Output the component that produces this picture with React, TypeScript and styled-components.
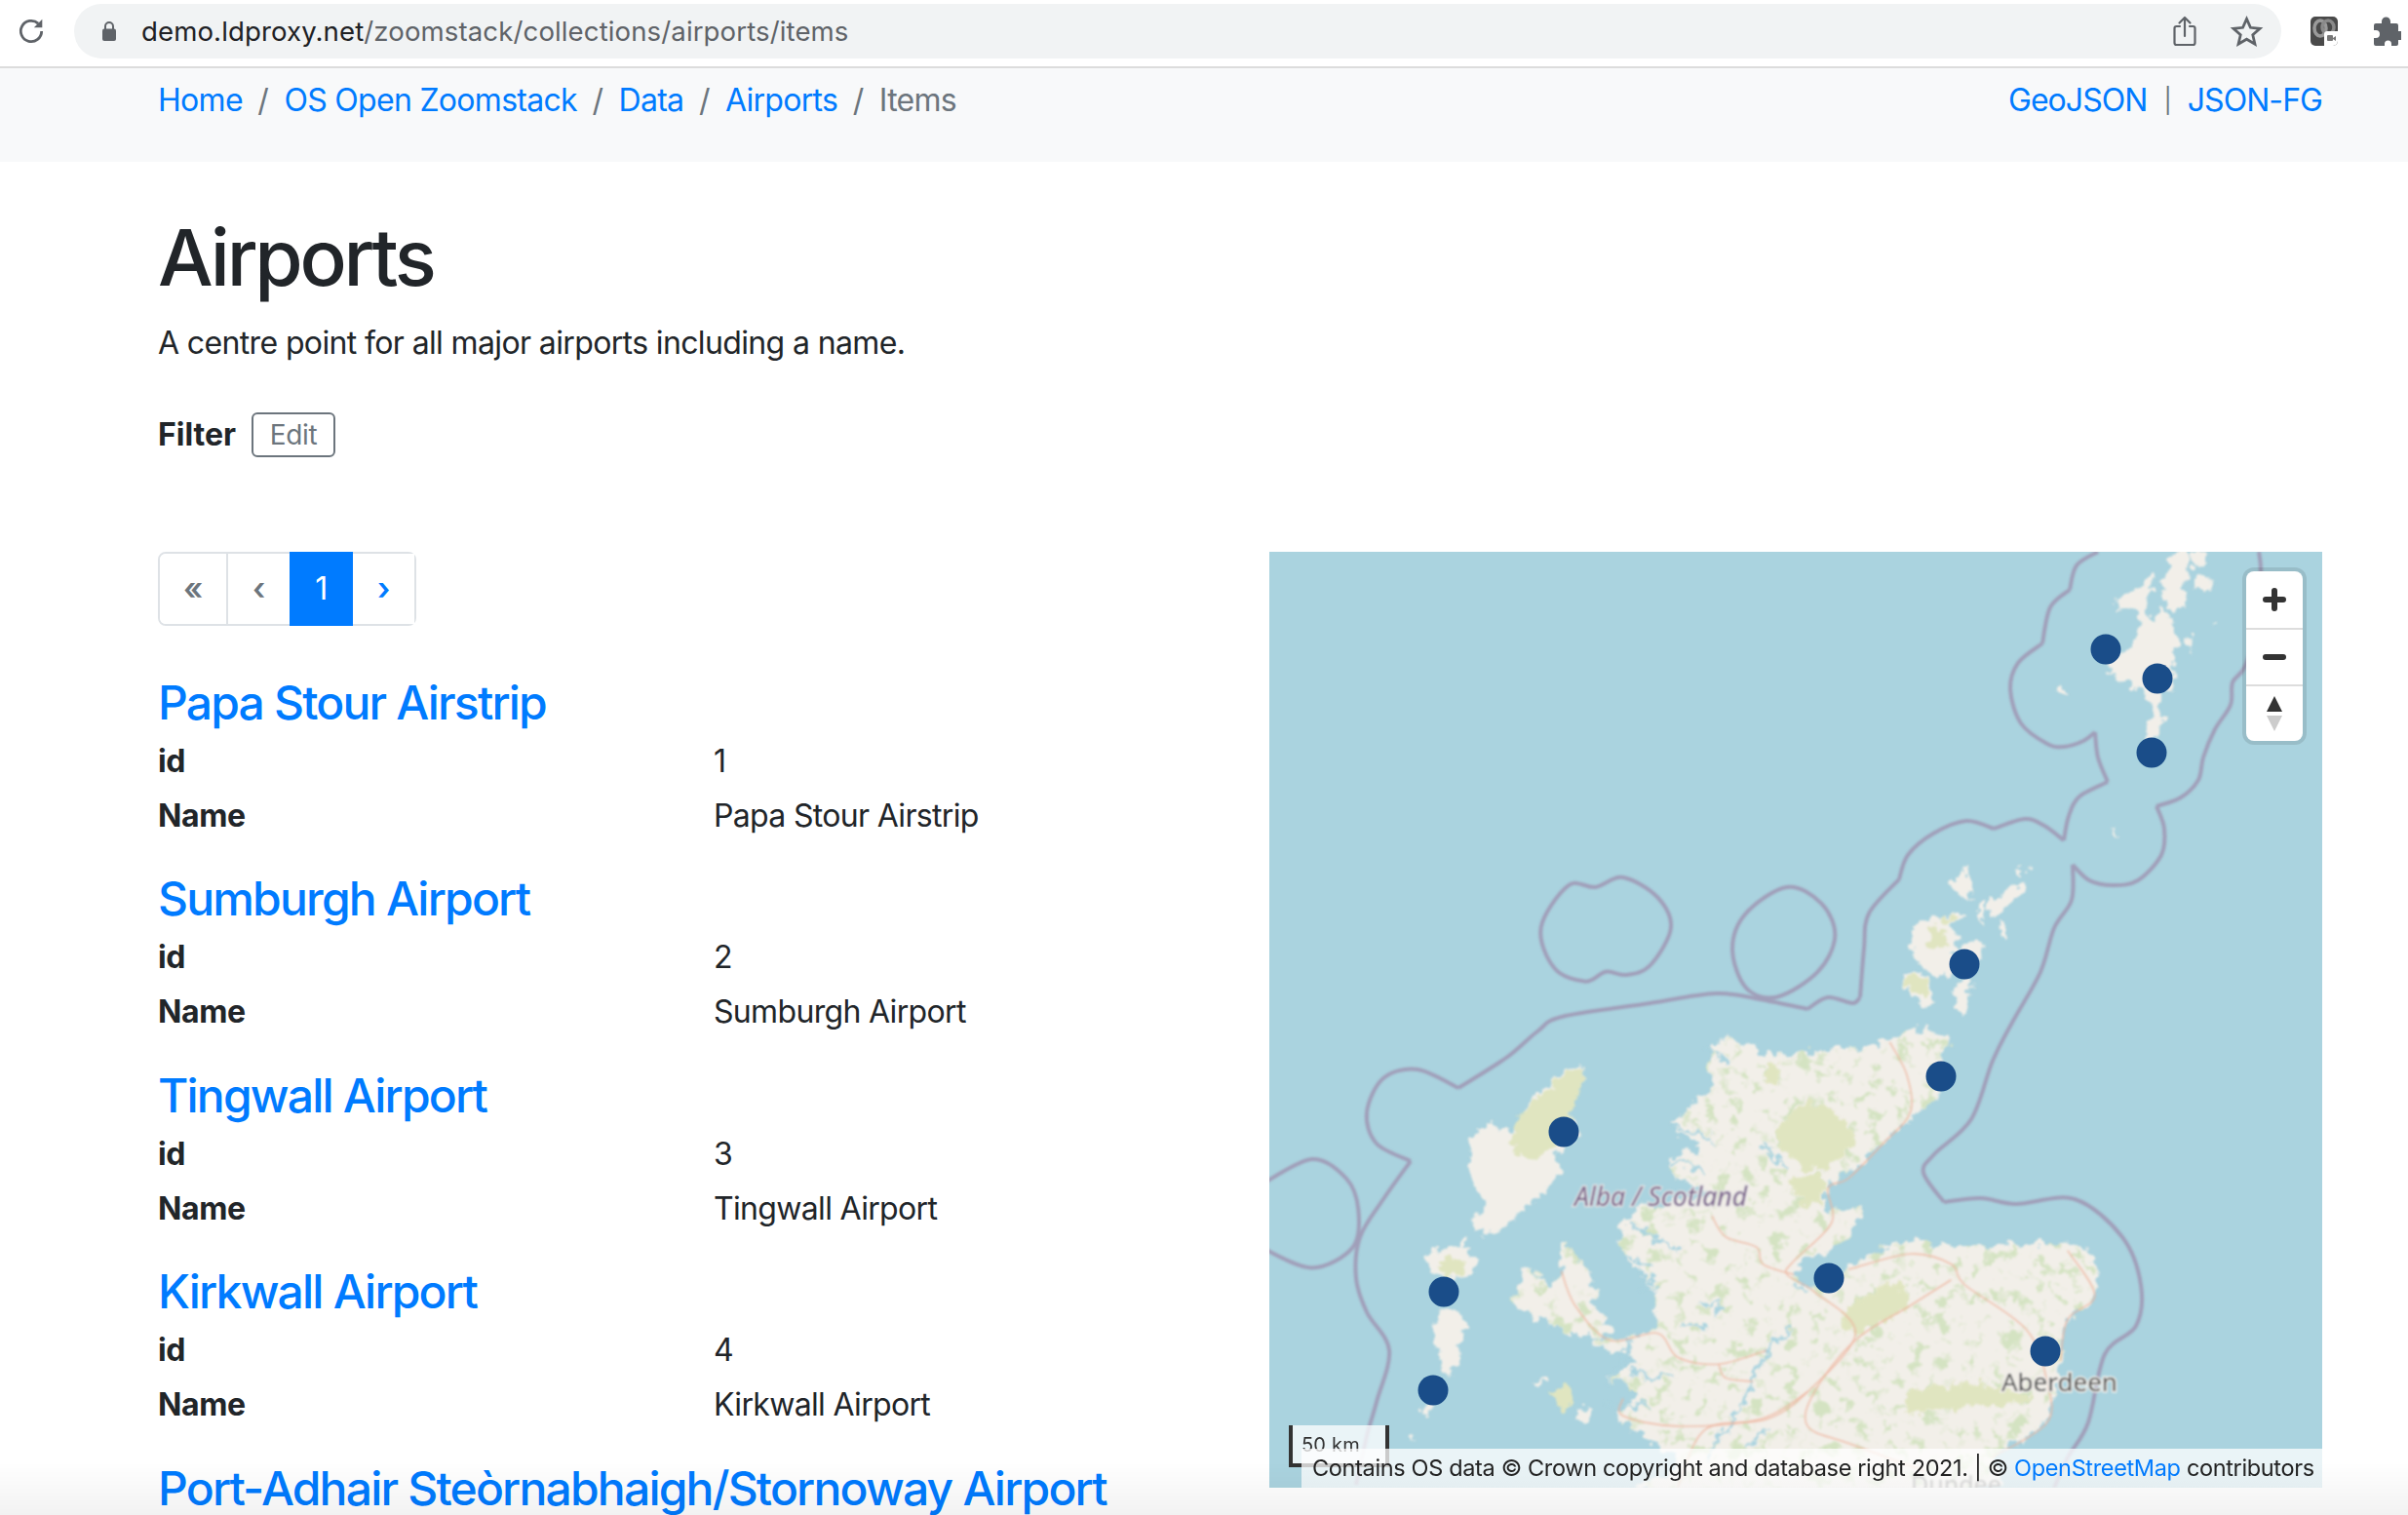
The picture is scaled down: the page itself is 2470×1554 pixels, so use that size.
import React from "react";
import styled, { createGlobalStyle } from "styled-components";

const Global = createGlobalStyle`
  html, body { margin: 0; padding: 0; background: #fff; height: 1554px; overflow: hidden; }
  body { font-family: Inter, "Liberation Sans", sans-serif; font-size: 32px; line-height: 48px; color: #212529; }
  a { color: #007bff; text-decoration: none; }
`;

const Page = styled.div`position: relative; width: 2470px; height: 1554px; overflow: hidden;`;
const Toolbar = styled.header`
  display: flex; align-items: center; background: #fff; border-bottom: 2px solid #dcdcdc; padding: 0 7px 4px 16px; height: 64px;
`;
const ToolIcon = styled.svg`display: block; flex: none;`;
const UrlPill = styled.div`
  margin-left: 28px; width: 2264px; height: 56px; border-radius: 28px; background: #f1f3f4; display: flex; align-items: center; padding: 0 18px 0 28px; box-sizing: border-box; flex: none; gap: 25px;
`;
const Url = styled.span`font-size: 27.6px; line-height: 40px; color: #5f6368; flex: 1; letter-spacing: 0.1px;`;
const Host = styled.span`color: #202124;`;
const PillIcons = styled.div`display: flex; align-items: center; gap: 34px;`;
const ExtIcons = styled.div`display: flex; align-items: center; gap: 37px; margin-left: 30px;`;

const Crumbs = styled.nav`
  height: 96px; background: #f8f9fa; padding: 9px 88px 0 162px; box-sizing: border-box; display: flex; justify-content: space-between; letter-spacing: -0.7px;
`;
const CrumbList = styled.div`display: flex; color: #6c757d;`;
const Sep = styled.span`color: #6c757d; padding: 0 15.5px; letter-spacing: 0;`;
const Formats = styled.div`display: flex; align-items: center; height: 48px; letter-spacing: -0.95px;`;
const FormatSep = styled.span`color: #6c757d; padding: 0 17px; font-size: 25px;`;

const Main = styled.main`padding: 0 88px 0 162px;`;
const Title = styled.h1`
  margin: 0; padding-top: 50px; font-size: 80px; line-height: 96px; font-weight: 500; letter-spacing: -3.3px; color: #212529;
`;
const Description = styled.p`margin: 16px 0 0; letter-spacing: -0.63px;`;
const FilterRow = styled.div`display: flex; align-items: center; margin-top: 47px; height: 46px; gap: 16px;`;
const FilterLabel = styled.b`font-weight: 700; letter-spacing: 0;`;
const EditButton = styled.button`
  width: 86px; height: 46px; padding: 0; border: 2px solid #6c757d; border-radius: 6px; background: #fff; color: #6c757d;
  font: 400 28px Inter, sans-serif; letter-spacing: -0.3px;
`;
const Columns = styled.div`display: grid; grid-template-columns: 1080px 1080px; column-gap: 60px; margin-top: 97px;`;
const Pager = styled.div`display: flex; height: 76px; width: 265px; box-sizing: border-box; border: 2px solid #dee2e6; border-radius: 8px; margin-bottom: 45.5px;`;
const PageCell = styled.div<{ $w: number; $active?: boolean; $link?: boolean; $rule?: boolean }>`
  width: ${(p) => p.$w}px; display: flex; align-items: center; justify-content: center; box-sizing: border-box;
  margin: ${(p) => (p.$active ? "-2px 0" : "0")};
  background: ${(p) => (p.$active ? "#007bff" : "#fff")};
  color: ${(p) => (p.$active ? "#fff" : p.$link ? "#007bff" : "#6c757d")};
  border-right: ${(p) => (p.$rule ? "2px solid #dee2e6" : "none")};
  border-radius: ${(p) => (p.$rule ? "6px 0 0 6px" : "0")};
  font-weight: ${(p) => (p.$active ? 400 : 600)};
`;
const Feature = styled.section`height: 201.6px;`;
const FeatureTitle = styled.h3`
  margin: 0; font-size: 48px; line-height: 65px; font-weight: 500; letter-spacing: -1.8px; color: #007bff; white-space: nowrap;
`;
const Row = styled.div`display: grid; grid-template-columns: 570px 1fr; height: 56px; align-items: center; letter-spacing: -0.67px;`;
const Key = styled.b`font-weight: 700; letter-spacing: -0.4px;`;

const MapBox = styled.div`position: relative; width: 1080px; height: 960px; overflow: hidden; background: #aad3df;`;
const MapArt = styled.svg`display: block; position: absolute; left: 0; top: 0;`;
const Controls = styled.div`
  position: absolute; left: 1002px; top: 20px; width: 58px; border-radius: 8px; background: #fff; box-shadow: 0 0 0 4px rgba(0,0,0,.1); display: flex; flex-direction: column; overflow: hidden;
`;
const CtrlBtn = styled.div<{ $rule?: boolean }>`
  height: 58px; display: flex; align-items: center; justify-content: center; box-sizing: border-box;
  border-top: ${(p) => (p.$rule ? "2px solid #ddd" : "none")};
`;
const Scale = styled.div`
  position: absolute; left: 20px; top: 896px; width: 103px; height: 43px; box-sizing: border-box; border: 4px solid #333; border-top: none; background: rgba(255,255,255,.75);
  font: 400 20px/24px Inter, sans-serif; color: #333; padding: 8px 0 0 9px; letter-spacing: 0.2px;
`;
const Attribution = styled.div`
  position: absolute; right: 0; bottom: 0; left: 33px; height: 40px; background: rgba(255,255,255,.75); color: #222;
  font: 400 23.5px/40px Inter, sans-serif; padding-left: 11px; letter-spacing: -0.35px; white-space: nowrap;
`;
const BottomShade = styled.div`
  position: absolute; left: 0; right: 0; bottom: 0; height: 54px; pointer-events: none; background: linear-gradient(rgba(0,0,0,0), rgba(0,0,0,.05));
`;

type P = [number, number];
const z4 = (u: number, v: number): P => [598 + u / 3, -6 + v / 3];
const z6 = (u: number, v: number): P => [u / 1.4255 - 2, v / 3 - 6];
const z5 = (u: number, v: number): P => [u / 1.4255 - 2, 434 + v / 2.83];
const conv = (f: (u: number, v: number) => P, a: number[]) => {
  const out: P[] = [];
  for (let i = 0; i < a.length; i += 2) out.push(f(a[i], a[i + 1]));
  return out;
};
const smooth = (pts: P[], closed = false) => {
  const n = pts.length;
  const at = (i: number) => (closed ? pts[(i + n) % n] : pts[Math.max(0, Math.min(n - 1, i))]);
  let d = `M${pts[0][0].toFixed(1)} ${pts[0][1].toFixed(1)}`;
  const m = closed ? n : n - 1;
  for (let i = 0; i < m; i++) {
    const p0 = at(i - 1), p1 = at(i), p2 = at(i + 1), p3 = at(i + 2);
    d += `C${(p1[0] + (p2[0] - p0[0]) / 6).toFixed(1)} ${(p1[1] + (p2[1] - p0[1]) / 6).toFixed(1)} ${(p2[0] - (p3[0] - p1[0]) / 6).toFixed(1)} ${(p2[1] - (p3[1] - p1[1]) / 6).toFixed(1)} ${p2[0].toFixed(1)} ${p2[1].toFixed(1)}`;
  }
  return d + (closed ? "Z" : "");
};
const blob = (f: (u: number, v: number) => P, a: number[]) => smooth(conv(f, a), true);

const boundary: P[][] = [
  [[850,0],[828,14],[821,39]], [[821,39],[801,57],[793,94]], [[793,94],[768,114],[760,141],[771,176],[798,197],[815,200],[835,194],[847,185]],
  [[847,185],[850,211],[860,236]], [[860,236],[831,251],[820,271],[815,296]], [[815,296],[795,281],[775,274],[743,284]], [[743,284],[715,276],[681,289],[655,311],[646,336]],
  [[646,336],[615,371],[610,407],[606,457]], [[606,457],[598,463],[573,457],[552,469]], [[552,469],[503,459],[458,453],[384,464],[300,477],[275,492],[243,519],[194,550]],
  [[194,550],[152,531],[117,540],[100,575],[110,607],[145,625]], [[145,625],[117,664],[93,703],[89,745],[100,780],[123,819],[110,872],[100,907],[89,957]],
  [[1015,0],[1017,19],[1015,70],[1001,117],[988,134],[986,157],[970,182],[958,211],[953,234],[935,252],[910,261]],
  [[910,261],[918,284],[915,311],[891,337],[865,342],[841,337],[824,321]],
  [[824,321],[823,357],[805,386],[791,431],[763,481],[742,522],[720,582],[682,618],[671,637],[692,667]],
  [[692,667],[730,663],[766,669],[826,664],[875,703],[894,752],[889,794],[857,823],[840,893],[819,929],[805,960]],
];
const loops = [
  conv(z6, [400,1175,440,1045,480,1050,520,1020,570,1080,590,1175,560,1290,525,1320,495,1310,465,1340,420,1300]),
  conv(z6, [760,1050,810,1100,830,1200,805,1310,745,1388,700,1360,680,1240,700,1130]),
];
const leftLoop = conv(z5, [-10,610,65,535,115,590,133,680,125,790,65,850,-10,790]);

const islands = [
  blob(z4, [985,25,1030,25,1030,100,1010,190,965,180,960,100]),
  blob(z4, [1040,20,1090,25,1085,60,1050,55]),
  blob(z4, [1050,95,1095,95,1110,125,1075,135]),
  blob(z4, [880,120,920,95,908,225,960,200,1000,280,985,360,990,420,950,470,955,560,925,600,905,590,915,480,865,435,780,360,850,320,880,270,870,200,805,200,830,150]),
  blob(z4, [1020,300,1055,280,1035,315]),
  blob(z4, [632,445,650,440,655,465]),
  blob(z4, [798,880,812,870,805,898]),
  blob(z4, [1108,240,1125,240,1115,250]),
  blob(z6, [1000,1030,1022,990,1030,1090,1010,1070]),
  blob(z6, [1055,1110,1100,1040,1105,1060,1065,1130]),
  blob(z6, [1040,1100,1050,1095,1045,1160]),
  blob(z6, [1070,1155,1082,1195,1070,1205]),
  blob(z6, [1098,990,1110,985,1102,1015]),
  blob(z6, [945,1170,985,1150,1010,1200,1000,1260,1040,1210,1035,1290,990,1320,960,1300,945,1250]),
  blob(z6, [985,1130,1010,1140,1005,1170,990,1165]),
  blob(z6, [930,1330,950,1310,975,1380,960,1415,940,1370]),
  blob(z6, [1010,1345,1030,1340,1020,1440,1008,1420]),
  blob(z5, [450,260,462,310,440,400,455,450,425,520,430,570,410,620,375,680,335,750,305,740,300,700,320,660,295,575,300,480,315,440,360,440,385,370]),
  blob(z5, [235,810,275,790,305,830,290,880,250,870,235,850]),
  blob(z5, [250,975,285,985,285,1040,275,1150,255,1130,248,1050]),
  blob(z5, [225,1255,245,1250,235,1285]),
  blob(z5, [282,770,292,760,285,800]),
  blob(z5, [390,1180,410,1175,395,1195]),
  blob(z5, [460,1260,470,1265,465,1300,455,1290]),
  blob(z5, [210,1330,215,1350,208,1345]),
];
const mainland = [
  blob(z5, [430,780,470,860,482,970,505,1030,470,1050,420,1020,395,995,360,950,385,850,410,910,428,860]),
  blob(z5, [660,190,700,200,750,230,830,215,900,195,940,160,995,180,985,260,985,340,945,410,900,490,860,560,820,610,820,680,870,680,830,790,790,830,770,870,800,910,850,850,930,770,1010,790,1190,790,1210,930,1170,1010,1160,1130,1150,1220,1130,1320,1060,1400,1030,1500,560,1500,600,1420,515,1290,530,1240,540,1200,500,1170,540,1120,470,1060,560,1040,560,900,520,800,530,690,640,640,600,590,590,530,630,500,595,430,650,330,640,270]),
];
const heath = [
  blob(z5, [450,270,462,310,440,420,420,510,370,530,362,430,390,370]),
  blob(z5, [750,440,800,370,860,470,830,540,790,570,750,500]),
  blob(z5, [765,590,810,590,810,660,780,660]),
  blob(z5, [730,260,750,260,745,310,730,315]),
  blob(z5, [840,980,910,900,940,960,880,1030,850,1030]),
  blob(z5, [940,1210,1030,1190,1120,1230,1000,1260,940,1280]),
  blob(z5, [420,1200,445,1210,440,1260,420,1240]),
  blob(z5, [530,1180,550,1190,540,1205]),
  blob(z5, [255,830,285,830,285,870,260,865]),
  blob(z6, [945,1320,960,1340,965,1375,945,1365,932,1340]),
  blob(z6, [965,1175,985,1180,995,1230,975,1240]),
  blob(z6, [985,1130,1005,1145,1000,1165,990,1160]),
];
const roads = [
  conv(z5, [910,195,935,290,940,400,900,490,850,590,820,620,825,720,770,830,760,870,800,920,860,1040,790,1210,730,1290,640,1320,600,1488]),
  conv(z5, [850,855,940,810,1000,840,1020,900,1110,1030,1140,1180,1140,1300,1060,1400]),
  conv(z5, [1000,885,940,960,860,1060,800,1210,790,1310,850,1360,960,1440]),
  conv(z5, [650,700,670,760,715,790,725,840,770,870]),
  conv(z5, [430,860,450,960,500,1060,570,1040,600,1110,660,1130,730,1090]),
  conv(z5, [660,1130,670,1170,710,1180]),
  conv(z5, [520,1230,520,1280,600,1310,720,1290,790,1210]),
  conv(z5, [1170,800,1210,930,1170,1000,1160,1120]),
];
const water = [
  conv(z5, [545,880,575,900,545,915]),
  conv(z5, [630,950,665,965,650,985]),
  conv(z5, [610,1010,645,1025]),
  conv(z5, [720,480,760,560]),
  conv(z5, [530,1040,520,1120,495,1190]),
  conv(z5, [770,1010,720,1130,690,1260,640,1400]),
  conv(z5, [500,1240,530,1250,565,1255]),
  conv(z5, [770,900,790,920]),
  conv(z5, [590,440,640,470,660,490]),
  conv(z5, [590,540,640,570]),
  conv(z5, [530,720,570,770,600,800]),
  conv(z5, [525,820,570,850]),
  conv(z5, [640,210,670,250]),
  conv(z5, [730,1320,700,1370]),
  conv(z5, [530,1150,560,1170,590,1160]),
];

const markers: P[] = [[858,100],[911,130],[905,206],[713,423],[689,538],[302,595],[574,745],[796,820],[179,759],[168,860]];

const MapDrawing = () => (
  <MapArt width="1080" height="960" viewBox="0 0 1080 960">
    <defs>
      <filter id="rough" x="-5%" y="-5%" width="110%" height="110%" colorInterpolationFilters="sRGB">
        <feTurbulence type="fractalNoise" baseFrequency="0.09" numOctaves="4" seed="7" result="n" />
        <feDisplacementMap in="SourceGraphic" in2="n" scale="20" xChannelSelector="R" yChannelSelector="G" />
        <feGaussianBlur stdDeviation="0.9" />
      </filter>
      <filter id="mottle" x="-5%" y="-5%" width="110%" height="110%" colorInterpolationFilters="sRGB">
        <feTurbulence type="fractalNoise" baseFrequency="0.07" numOctaves="3" seed="3" result="n" />
        <feColorMatrix in="n" type="matrix" values="0 0 0 0 .83  0 0 0 0 .89  0 0 0 0 .76  7 0 0 0 -3.9" result="tint" />
        <feComposite in="tint" in2="SourceAlpha" operator="in" result="spots" />
        <feMerge result="land"><feMergeNode in="SourceGraphic" /><feMergeNode in="spots" /></feMerge>
        <feTurbulence type="fractalNoise" baseFrequency="0.09" numOctaves="4" seed="7" result="m" />
        <feDisplacementMap in="land" in2="m" scale="20" xChannelSelector="R" yChannelSelector="G" />
        <feGaussianBlur stdDeviation="0.9" />
      </filter>
      <filter id="soft"><feGaussianBlur stdDeviation="0.8" /></filter>
    </defs>
    <g filter="url(#rough)">
      {islands.map((d, i) => <path key={i} d={d} fill="#f2efe9" />)}
      {heath.map((d, i) => <path key={i} d={d} fill="#e0e5c0" />)}
    </g>
    <g filter="url(#mottle)">
      {mainland.map((d, i) => <path key={i} d={d} fill="#f2efe9" />)}
    </g>
    <g filter="url(#rough)">
      {heath.slice(1, 6).map((d, i) => <path key={i} d={d} fill="#e0e5c0" />)}
      {water.map((p, i) => <path key={i} d={smooth(p)} fill="none" stroke="#aad3df" strokeWidth="3" />)}
    </g>
    <g filter="url(#soft)" fill="none">
      {roads.map((p, i) => <path key={i} d={smooth(p)} stroke="#eeb29b" strokeWidth="1.6" opacity="0.75" />)}
      {boundary.map((p, i) => <path key={i} d={smooth(p)} stroke="#a09fb9" strokeWidth="4" />)}
      {loops.map((p, i) => <path key={i} d={smooth(p, true)} stroke="#a09fb9" strokeWidth="4" />)}
      <path d={smooth(leftLoop)} stroke="#a09fb9" strokeWidth="4" />
    </g>
    <g filter="url(#soft)">
      <text x="313" y="671" fontFamily="'Noto Sans', sans-serif" fontStyle="italic" fontSize="26.5" fill="#775f88" stroke="#e8e6e6" strokeWidth="2.5" paintOrder="stroke">Alba / Scotland</text>
      <text x="751" y="861" fontFamily="'Noto Sans', sans-serif" fontSize="26" fill="#444" stroke="#f2f0ec" strokeWidth="3" paintOrder="stroke">Aberdeen</text>
      <text x="658" y="966" fontFamily="'Noto Sans', sans-serif" fontSize="25" fill="#666">Dundee</text>
    </g>
    {markers.map(([x, y], i) => <circle key={i} cx={x} cy={y} r="15.5" fill="#1a4d89" />)}
  </MapArt>
);

const rows = [
  ["Papa Stour Airstrip", "1"],
  ["Sumburgh Airport", "2"],
  ["Tingwall Airport", "3"],
  ["Kirkwall Airport", "4"],
];

export default function App() {
  return (
    <Page>
      <Global />
      <Toolbar>
        <ToolIcon width="32" height="32" viewBox="0 0 24 24" fill="none" stroke="#5f6368" strokeWidth="2.1">
          <path d="M20 12a8 8 0 1 1-2.600-5.900" />
          <path d="M20.500 2.800v6.400h-6.400z" fill="#5f6368" stroke="none" />
        </ToolIcon>
        <UrlPill>
          <ToolIcon width="16" height="22" viewBox="0 0 16 22">
            <path d="M4 9V6a4 4 0 0 1 8 0v3" fill="none" stroke="#5f6368" strokeWidth="2" />
            <rect x="1" y="8.500" width="14" height="12.500" rx="2" fill="#5f6368" />
          </ToolIcon>
          <Url><Host>demo.ldproxy.net</Host>/zoomstack/collections/airports/items</Url>
          <PillIcons>
            <ToolIcon width="24" height="32" viewBox="0 0 24 32" fill="none" stroke="#5f6368" strokeWidth="2.200" strokeLinecap="round" strokeLinejoin="round">
              <path d="M7 11H3.500a2 2 0 0 0-2 2v15a2 2 0 0 0 2 2h17a2 2 0 0 0 2-2V13a2 2 0 0 0-2-2H17" />
              <path d="M12 21V2M6.500 7.500 12 2l5.500 5.500" />
            </ToolIcon>
            <ToolIcon width="35" height="35" viewBox="0 0 24 24" fill="none" stroke="#5f6368" strokeWidth="1.900" strokeLinejoin="miter">
              <path d="m12 3 2.700 6.100 6.600.7-5 4.400 1.500 6.500L12 17.300l-5.800 3.400 1.500-6.500-5-4.400 6.600-.7z" />
            </ToolIcon>
          </PillIcons>
        </UrlPill>
        <ExtIcons>
          <ToolIcon width="28" height="32" viewBox="0 0 28 32">
            <rect x="0" y="1" width="28" height="30" rx="5" fill="#4a4a4a" />
            <ellipse cx="10" cy="13" rx="6" ry="8" fill="none" stroke="#9a9a9a" strokeWidth="3.500" />
            <ellipse cx="18" cy="12" rx="6" ry="7" fill="none" stroke="#8a8a8a" strokeWidth="3.500" />
            <path d="M14 19a3 3 0 0 1 3-3h11v10a5 5 0 0 1-5 5h-9z" fill="#fff" />
            <rect x="17" y="20" width="6" height="6" rx="1" fill="#777" />
            <path d="m23 23 3-2v5l-3-2z" fill="#777" />
          </ToolIcon>
          <ToolIcon width="28" height="30" viewBox="0 0 28 30">
            <path d="M2 7h6V5a4.500 4.500 0 0 1 9 0v2h6a2 2 0 0 1 2 2v6h2a4.500 4.500 0 0 1 0 9h-2v4a2 2 0 0 1-2 2h-5v-2a3.500 3.500 0 0 0-7 0v2H2a2 2 0 0 1-2-2v-6h2a4 4 0 0 0 0-8H0V9a2 2 0 0 1 2-2z" fill="#5f6368" />
          </ToolIcon>
        </ExtIcons>
      </Toolbar>
      <Crumbs>
        <CrumbList>
          <a href="#h">Home</a><Sep>/</Sep>
          <a href="#z">OS Open Zoomstack</a><Sep>/</Sep>
          <a href="#d">Data</a><Sep>/</Sep>
          <a href="#a">Airports</a><Sep>/</Sep>
          <span>Items</span>
        </CrumbList>
        <Formats>
          <a href="#g">GeoJSON</a><FormatSep>|</FormatSep><a href="#f">JSON-FG</a>
        </Formats>
      </Crumbs>
      <Main>
        <Title>Airports</Title>
        <Description>A centre point for all major airports including a name.</Description>
        <FilterRow>
          <FilterLabel>Filter</FilterLabel>
          <EditButton>Edit</EditButton>
        </FilterRow>
        <Columns>
          <div>
            <Pager>
              <PageCell $w={71} $rule>«</PageCell>
              <PageCell $w={63}>‹</PageCell>
              <PageCell $w={66} $active>1</PageCell>
              <PageCell $w={63} $link>›</PageCell>
            </Pager>
            {rows.map(([name, id]) => (
              <Feature key={id}>
                <FeatureTitle><a href="#i">{name}</a></FeatureTitle>
                <Row><Key>id</Key><span>{id}</span></Row>
                <Row><Key>Name</Key><span>{name}</span></Row>
              </Feature>
            ))}
            <FeatureTitle><a href="#i">Port-Adhair Steòrnabhaigh/Stornoway Airport</a></FeatureTitle>
          </div>
          <MapBox>
            <MapDrawing />
            <Controls>
              <CtrlBtn>
                <svg width="24" height="24" viewBox="0 0 24 24"><path d="M12 3v18M3 12h18" stroke="#333" strokeWidth="6" strokeLinecap="round" /></svg>
              </CtrlBtn>
              <CtrlBtn $rule>
                <svg width="24" height="8" viewBox="0 0 24 8"><path d="M3 4h18" stroke="#333" strokeWidth="6" strokeLinecap="round" /></svg>
              </CtrlBtn>
              <CtrlBtn $rule>
                <svg width="18" height="38" viewBox="0 0 18 38"><path d="M9 1 17 17H1z" fill="#333" /><path d="M1 21h16L9 37z" fill="#ccc" /></svg>
              </CtrlBtn>
            </Controls>
            <Scale>50 km</Scale>
            <Attribution>Contains OS data © Crown copyright and database right 2021. | © <a href="#o">OpenStreetMap</a> contributors</Attribution>
          </MapBox>
        </Columns>
      </Main>
      <BottomShade />
    </Page>
  );
}
